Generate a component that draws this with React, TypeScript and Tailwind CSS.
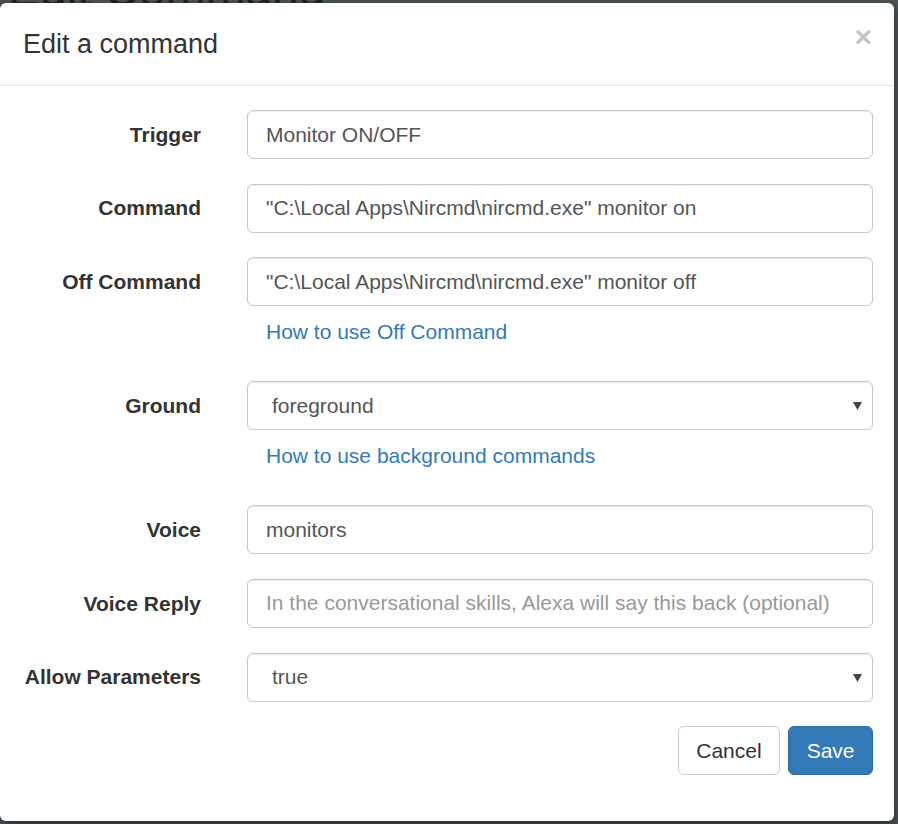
import React from "react";

type Row = {
  label: string;
  value?: string;
  placeholder?: string;
  select?: boolean;
  help?: string;
};

const ROWS: Row[] = [
  { label: "Trigger", value: "Monitor ON/OFF" },
  { label: "Command", value: '"C:\\Local Apps\\Nircmd\\nircmd.exe" monitor on' },
  {
    label: "Off Command",
    value: '"C:\\Local Apps\\Nircmd\\nircmd.exe" monitor off',
    help: "How to use Off Command",
  },
  { label: "Ground", value: "foreground", select: true, help: "How to use background commands" },
  { label: "Voice", value: "monitors" },
  {
    label: "Voice Reply",
    placeholder: "In the conversational skills, Alexa will say this back (optional)",
  },
  { label: "Allow Parameters", value: "true", select: true },
];

const FONT = "font-['Liberation_Sans',Arial,sans-serif]";

function Field({ row }: { row: Row }) {
  const box =
    "flex h-[49px] w-full items-center rounded-[6px] border border-[#c8c8c8] bg-white text-[21px] shadow-[inset_0_1px_1px_rgba(0,0,0,0.075)]";
  if (row.select) {
    return (
      <div className={`${box} justify-between pl-[24px] pr-[10px] text-[#555]`}>
        <span>{row.value}</span>
        <svg width="9" height="8" viewBox="0 0 9 8" className="mt-[1px]">
          <path d="M0 0h9L4.5 8z" fill="#444" />
        </svg>
      </div>
    );
  }
  return (
    <input
      readOnly
      value={row.value ?? ""}
      placeholder={row.placeholder}
      className={`${box} px-[18px] text-[#555] outline-none placeholder:text-[#999]`}
    />
  );
}

export default function App() {
  return (
    <div className={`flex h-[824px] w-[898px] flex-col overflow-hidden bg-[#4e5557] ${FONT}`}>
      {/* backdrop page peeking out at the top */}
      <div className="h-[3px] overflow-hidden">
        <div className="-mt-[34px] pl-[8px] text-[48px] leading-[48px] text-[#1d2224]">
          Edit Command
        </div>
      </div>

      <div className="flex h-[818px] w-[894px] shrink-0 flex-col rounded-[6px] bg-white shadow-[0_5px_15px_rgba(0,0,0,0.5)]">
        <div className="flex h-[83px] shrink-0 items-center justify-between border-b border-[#e5e5e5] pl-[23px] pr-[22px]">
          <h4 className="text-[27px] leading-none text-[#333]">Edit a command</h4>
          <span className="mt-[-14px] self-center text-[30px] font-bold leading-none text-[#c4c4c4] [text-shadow:0_1px_0_#fff]">
            ×
          </span>
        </div>

        <div className="px-[21px] pt-[24px]">
          {ROWS.map((row) => (
            <div key={row.label} className="mb-[24.6px] flex">
              <label className="flex h-[49px] w-[180px] shrink-0 items-center justify-end text-[21px] font-bold text-[#333]">
                {row.label}
              </label>
              <div className="ml-[46px] flex-1">
                <Field row={row} />
                {row.help && (
                  <div className="mt-[12px] mb-[10.5px] h-[28px] pl-[19px] text-[21px] leading-[28px] text-[#337ab7]">
                    {row.help}
                  </div>
                )}
              </div>
            </div>
          ))}

          <div className="flex justify-end gap-[8px]">
            <button className="h-[49px] rounded-[6px] border border-[#ccc] bg-white px-[17.5px] text-[21px] text-[#333]">
              Cancel
            </button>
            <button className="h-[49px] rounded-[6px] border border-[#2e6da4] bg-[#337ab7] px-[17.5px] text-[21px] text-white">
              Save
            </button>
          </div>
        </div>
      </div>

      {/* backdrop page peeking out at the bottom */}
      <div className="flex-1 overflow-hidden">
        <div className="flex gap-[30px] pl-[78px] pt-[1px] text-[20px] leading-[20px]">
          <span className="font-bold text-[#6b1a1a]">Command</span>
          <span className="text-[#1d2224]">nircmd.exe monitor on/off</span>
        </div>
      </div>
    </div>
  );
}
